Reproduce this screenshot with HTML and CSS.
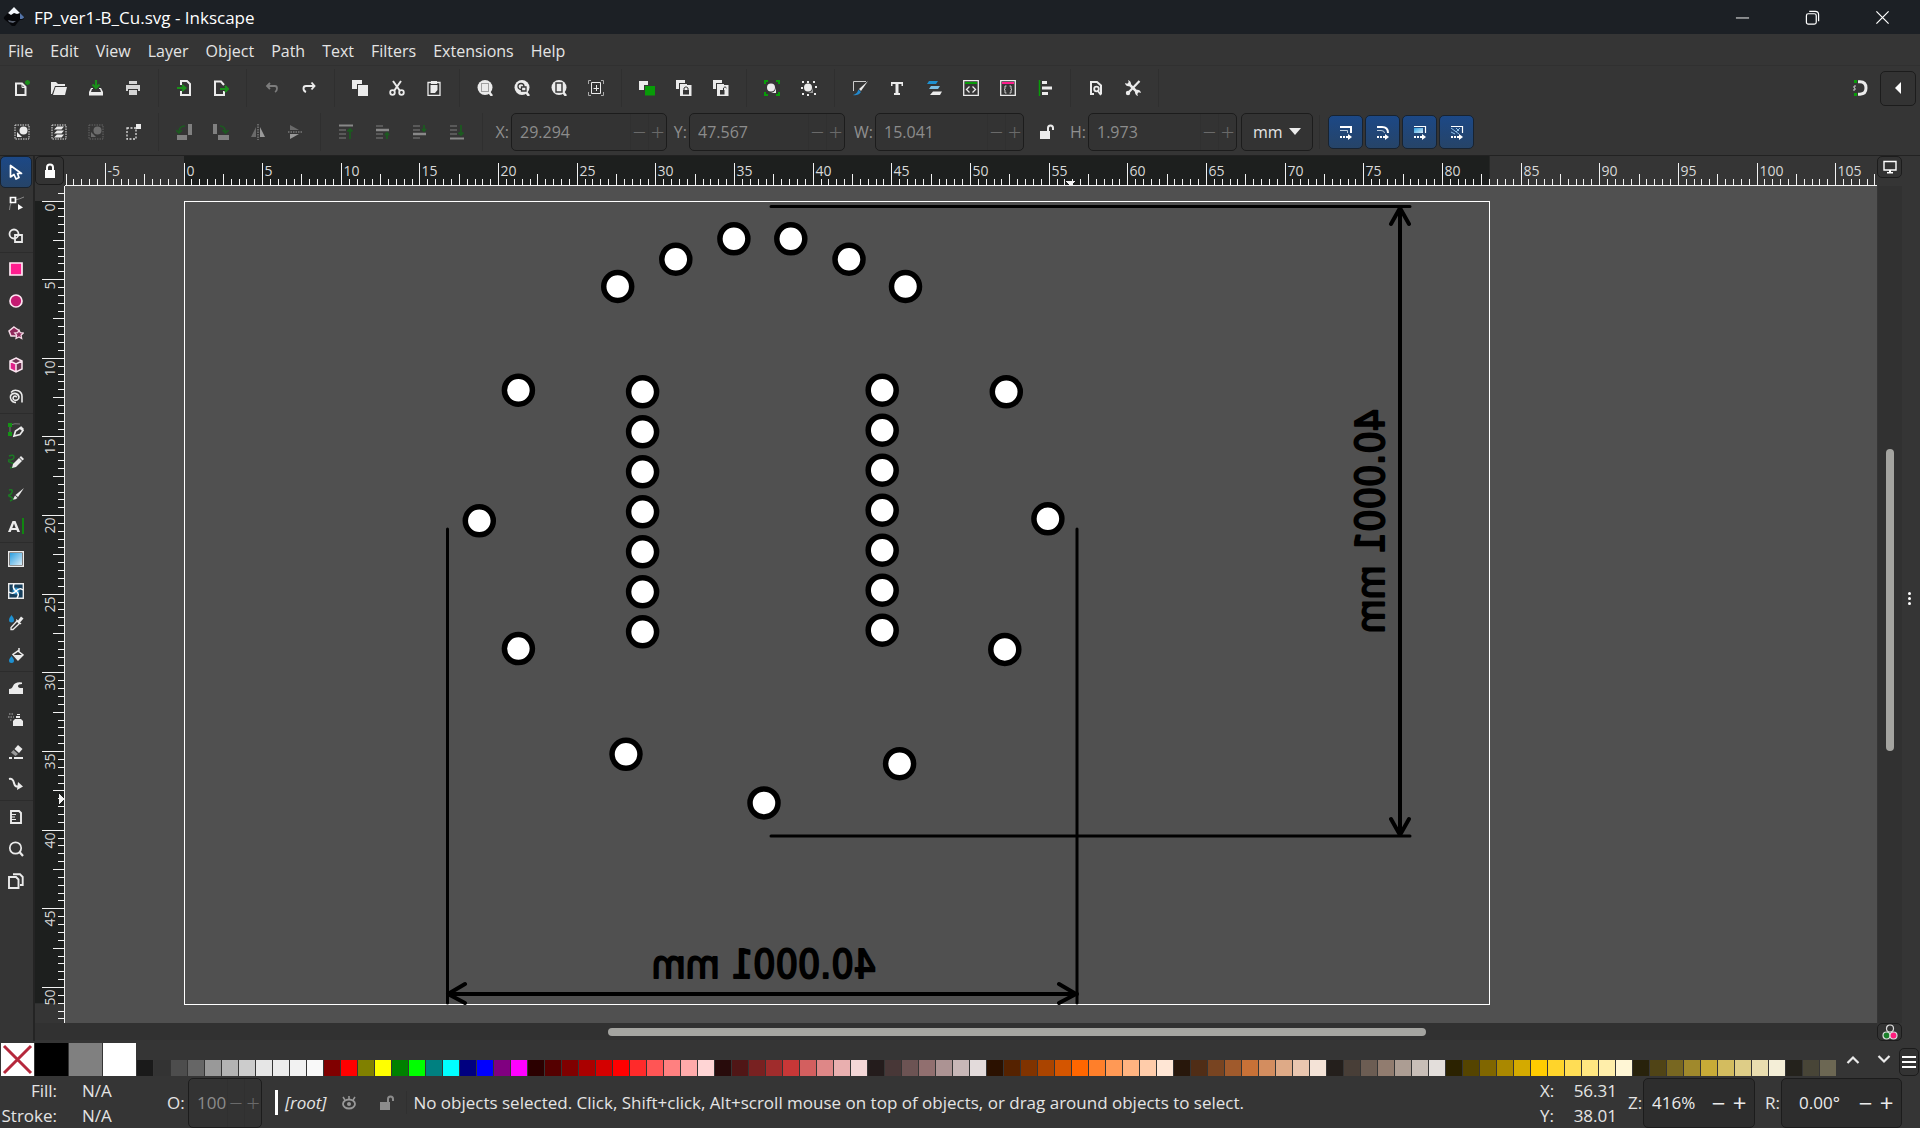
FILE: index.html
```html
<!DOCTYPE html>
<html lang="en">
<head>
    <meta charset="UTF-8">
    <meta name="viewport" content="width=device-width, initial-scale=1.0">
    <title>FP_ver1-B_Cu.svg - Inkscape</title>
    <link rel="stylesheet" href="styles.css">
</head>
<body>
    <!-- Icon symbols -->
    <svg class="sprite" aria-hidden="true">
        <defs>
            <linearGradient id="blue-fade" x1="0" y1="0" x2="1" y2="1"><stop offset="0" stop-color="#2c9fe0"/><stop offset="1" stop-color="#d8ecf8"/></linearGradient>
        </defs>
        <symbol id="i-logo" viewBox="0 0 22 22"><path d="M11 1 21 11Q22 14 17 14L15 16 12 20H9L6 17 2 14Q0 12 1 11Z" fill="#06070a"/><path d="M11 1 17 7 14 8 11 7 8 9 5 7Z" fill="#f2f6fb"/><path d="M17 7 21 11Q21 13 17 13Z" fill="#5474a8"/><path d="M5 14 9 15 13 15 10 17 6 16Z" fill="#5a6270"/></symbol>
        <symbol id="i-new" viewBox="0 0 16 16"><path d="M2 3.500H8L11.500 7V15H2Z" fill="none" stroke="#ebebeb" stroke-width="2"/><path d="M8 3V7.500H12" fill="none" stroke="#ebebeb"/><path d="M13.500 0V5M11 2.500H16M11.700 .7 15.300 4.300M15.300 .7 11.700 4.300" stroke="#1a8f1a" stroke-width="1.300"/></symbol>
        <symbol id="i-open" viewBox="0 0 16 16"><path d="M0 2H5L7 4H14V6H4L1 14H0Z" fill="#ebebeb"/><path d="M4.500 7H16L14 15H2Z" fill="#ebebeb"/></symbol>
        <symbol id="i-save" viewBox="0 0 16 16"><path d="M8 0V7M4.500 4.500 8 8 11.500 4.500" fill="none" stroke="#1a8f1a" stroke-width="2.200"/><path d="M3 8 1 12V15.500H15V12L13 8H11V9H12L13 12H3L4 9H5V8Z" fill="#ebebeb"/></symbol>
        <symbol id="i-print" viewBox="0 0 16 16"><path d="M4 1H12V4H4ZM1 5H15V11H13V9H3V11H1ZM4 10H12V15H4Z" fill="#d4d4d4"/></symbol>
        <symbol id="i-import" viewBox="0 0 16 16"><path d="M5 5V1H11L14 4V15H5V11" fill="none" stroke="#ebebeb" stroke-width="2"/><path d="M1 8H9M6 5 9.500 8 6 11" fill="none" stroke="#1a8f1a" stroke-width="2"/></symbol>
        <symbol id="i-export" viewBox="0 0 16 16"><path d="M11 5 8 1.500H2V15H11V11" fill="none" stroke="#ebebeb" stroke-width="2"/><path d="M7 9H15M12 6 15 9 12 12" fill="none" stroke="#1a8f1a" stroke-width="2"/></symbol>
        <symbol id="i-undo" viewBox="0 0 16 16"><path d="M6 3 3 6 6 9M3 6H11Q13 6 13 8.500T11 12" fill="none" stroke="#7c7c7c" stroke-width="1.800"/></symbol>
        <symbol id="i-redo" viewBox="0 0 16 16"><path d="M10.500 2.500 13.500 6 10.500 9.500M13.500 6H5Q2.500 6 2.500 8.500T5 12" fill="none" stroke="#ebebeb" stroke-width="1.900"/></symbol>
        <symbol id="i-copy" viewBox="0 0 16 16"><path d="M0 0H10V4H5V9H0ZM6 5H16V16H6Z" fill="#ebebeb"/></symbol>
        <symbol id="i-cut" viewBox="0 0 16 16"><path d="M4 1 11 11M12 1 5 11" stroke="#ebebeb" stroke-width="2"/><circle cx="3.500" cy="12.500" r="2.300" fill="none" stroke="#ebebeb" stroke-width="1.800"/><circle cx="12.500" cy="12.500" r="2.300" fill="none" stroke="#ebebeb" stroke-width="1.800"/></symbol>
        <symbol id="i-paste" viewBox="0 0 16 16"><path d="M2 2.500H14V15.500H2Z" fill="none" stroke="#ebebeb" stroke-width="1.300"/><path d="M5 1H11V4H5ZM4.500 5H11.500V10L9 13H4.500Z" fill="#ebebeb"/></symbol>
        <symbol id="i-zoomsel" viewBox="0 0 16 16"><circle cx="8" cy="7.500" r="7.500" fill="#ebebeb"/><path d="M12 12 15 16" stroke="#ebebeb" stroke-width="2.500"/><path d="M4.500 3.500H11.500V11.500H4.500Z" fill="none" stroke="#555" stroke-dasharray="1 1"/></symbol>
        <symbol id="i-zoomdraw" viewBox="0 0 16 16"><circle cx="8" cy="7.500" r="7.500" fill="#ebebeb"/><path d="M12 12 15 16" stroke="#ebebeb" stroke-width="2.500"/><path d="M7 9.500A3 3 0 1 1 10 6.500M7.500 7H12V11H7.500Z" fill="none" stroke="#353535" stroke-width="1.300"/></symbol>
        <symbol id="i-zoompage" viewBox="0 0 16 16"><circle cx="8" cy="7.500" r="7.500" fill="#ebebeb"/><path d="M12 12 15 16" stroke="#ebebeb" stroke-width="2.500"/><path d="M5 3H11V12H5Z" fill="none" stroke="#353535" stroke-width="1.400"/></symbol>
        <symbol id="i-zoomcenter" viewBox="0 0 16 16"><path d="M3.500 2.500H12.500V13.500H3.500ZM8.500 5V11M5.500 8.500H11" fill="none" stroke="#ebebeb"/><path d="M.5 4V.5H3M13 .5H15.500V4M15.500 12V15.500H13M3 15.500H.5V12" fill="none" stroke="#aaa"/></symbol>
        <symbol id="i-dup" viewBox="0 0 16 16"><path d="M0 1H9V5H5V10H0Z" fill="#ebebeb"/><path d="M6 6H16V15.500H6Z" fill="#089c08"/></symbol>
        <symbol id="i-clone" viewBox="0 0 16 16"><path d="M0 0H9V3H3V9H0ZM4 4H11V5H15.500V16H4Z" fill="#ebebeb"/><path d="M7 10H13V14.500H7Z" fill="#353535"/><path d="M8 10V8Q10 5.500 12 8V10" fill="none" stroke="#353535"/></symbol>
        <symbol id="i-unclone" viewBox="0 0 16 16"><path d="M0 0H9V3H3V9H0ZM4 4H11V5H15.500V16H4Z" fill="#ebebeb"/><path d="M7 10H11.500V14.500H7Z" fill="#353535"/><path d="M10.500 10V8Q12 5.500 13.500 8" fill="none" stroke="#353535"/></symbol>
        <symbol id="i-group" viewBox="0 0 16 16"><circle cx="7" cy="7.500" r="4" fill="#ebebeb"/><path d="M12 7V13H7Q12 12 12 7Z" fill="#ebebeb"/><path d="M0 0H4V2H2V4H0ZM16 0V4H14V2H12V0ZM0 16V12H2V14H4V16ZM16 16H12V14H14V12H16Z" fill="#089c08"/></symbol>
        <symbol id="i-ungroup" viewBox="0 0 16 16"><circle cx="7" cy="7.500" r="4" fill="#ebebeb"/><path d="M12 7V13H7Q12 12 12 7Z" fill="#999"/><path d="M1 1H3V3H1ZM6 1H8V3H6ZM12 1H14V3H12ZM1 13H3V15H1ZM6 14H8V16H6ZM13 13H15V15H13ZM0 7H2V9H0ZM14 6H16V8H14Z" fill="#ebebeb"/></symbol>
        <symbol id="i-fill" viewBox="0 0 16 16"><path d="M14 1.500H1.500V11" fill="none" stroke="#ccc"/><path d="M16 1 9 11 7 9Z" fill="#ebebeb"/><path d="M6.500 9.500 9 12Q6 16 1 15 5 14 6.500 9.500Z" fill="#2288cc"/></symbol>
        <symbol id="i-text" viewBox="0 0 16 16"><path d="M2 2H14V6H12.500V4H9.500V13H11V15H5V13H6.500V4H3.500V6H2Z" fill="#ebebeb"/></symbol>
        <symbol id="i-layers" viewBox="0 0 16 16"><path d="M3 1H12L10 4H1Z" fill="#1e90d0"/><path d="M5 6H14L12 9H3Z" fill="#7cc0e6"/><path d="M7 11.500H16L14 15H4Z" fill="#ebebeb"/></symbol>
        <symbol id="i-xml" viewBox="0 0 16 16"><path d="M.7 .7H15.300V15.300H.7Z" fill="none" stroke="#ebebeb" stroke-width="1.300"/><path d="M2 2H14V4H2Z" fill="#089c08"/><path d="M6.500 6.500 3.500 9.500 6.500 12.500M9.500 6.500 12.500 9.500 9.500 12.500" fill="none" stroke="#ebebeb" stroke-width="1.300"/></symbol>
        <symbol id="i-css" viewBox="0 0 16 16"><path d="M.7 .7H15.300V15.300H.7Z" fill="none" stroke="#ebebeb" stroke-width="1.300"/><path d="M2 2H14V4H2Z" fill="#ff1d8e"/><path d="M6.500 6H5V9L4 9.500 5 10V13H6.500M9.500 6H11V9L12 9.500 11 10V13H9.500" fill="none" stroke="#ccc"/></symbol>
        <symbol id="i-align" viewBox="0 0 16 16"><path d="M2.500 0V16" stroke="#089c08" stroke-width="1.500"/><path d="M5 1H10V4H5ZM5 6.500H15V9.500H5ZM5 12H11V15H5Z" fill="#ebebeb"/></symbol>
        <symbol id="i-docprefs" viewBox="0 0 16 16"><path d="M6 14H3V2H9L13 5.500V14" fill="none" stroke="#ebebeb" stroke-width="2"/><circle cx="8.500" cy="9" r="2.300" fill="none" stroke="#ebebeb" stroke-width="1.800"/><path d="M9.500 10.500 13 15" stroke="#ebebeb" stroke-width="2"/></symbol>
        <symbol id="i-prefs" viewBox="0 0 16 16"><path d="M3 3 13 13" stroke="#ebebeb" stroke-width="2.500"/><path d="M14.500 1 3 13" stroke="#ebebeb" stroke-width="2.200"/><path d="M0 3Q1 7 5 6L6 4Q6 1 3 0L4 3 3 4ZM16 13Q15 9 11 10L10 12Q10 15 13 16L12 13 13 12Z" fill="#ebebeb"/><circle cx="3" cy="13" r="2.200" fill="#ebebeb"/></symbol>
        <symbol id="i-snap" viewBox="0 0 16 16"><path d="M6 1.800H8Q14 2 14 8T8 14.200H6" fill="none" stroke="#ebebeb" stroke-width="3"/><path d="M2 0H5V3H2ZM2 13H5V16H2Z" fill="#089c08"/><path d="M4 6H2V8H3V10H1" fill="none" stroke="#ccc"/></symbol>
        <symbol id="i-left" viewBox="0 0 16 16"><path d="M11 2V14L5 8Z" fill="#fff"/></symbol>

        <symbol id="i-selall" viewBox="0 0 16 16"><path d="M1 1H15V15H1Z" fill="none" stroke="#ddd" stroke-dasharray="1.500 1"/><circle cx="9.500" cy="6.500" r="4" fill="#ebebeb"/><path d="M3 8 8 13H3Z" fill="#ebebeb"/></symbol>
        <symbol id="i-sellayers" viewBox="0 0 16 16"><path d="M1 1H15V15H1Z" fill="none" stroke="#ddd" stroke-dasharray="1.500 1"/><path d="M6 2.500H13L10.500 5.500H3ZM6 6.500H13L10.500 9.500H3ZM6 10.500H13L10.500 13.500H3Z" fill="#ebebeb"/></symbol>
        <symbol id="i-desel" viewBox="0 0 16 16"><path d="M1 1H15V15H1Z" fill="none" stroke="#666" stroke-dasharray="1.500 1"/><circle cx="9.500" cy="6.500" r="4" fill="#6c6c6c"/><path d="M3 8 8 13H3Z" fill="#6c6c6c"/></symbol>
        <symbol id="i-touch" viewBox="0 0 16 16"><path d="M2 4H11V15H2Z" fill="none" stroke="#ddd" stroke-width="1.300" stroke-dasharray="2 1.500"/><path d="M11 0H16V5H11Z" fill="#ebebeb"/></symbol>
        <symbol id="i-rotl" viewBox="0 0 16 16"><path d="M12 0H16V11H12ZM1 11H11V16H1Z" fill="#808080"/><path d="M3 8Q3 2 9 2M0 6 3 9 6 6" fill="none" stroke="#1c5a20" stroke-width="1.600"/></symbol>
        <symbol id="i-rotr" viewBox="0 0 16 16"><path d="M0 0H4V10H0ZM5 11H16V16H5Z" fill="#808080"/><path d="M7 2Q12 2 12.500 8M9.500 6 12.500 9 15.500 6" fill="none" stroke="#1c5a20" stroke-width="1.600"/></symbol>
        <symbol id="i-fliph" viewBox="0 0 16 16"><path d="M6 3V13H1Z" fill="#6a6a6a"/><path d="M10 3V13H15Z" fill="#999"/><path d="M8 0V16" stroke="#999" stroke-dasharray="1.500 1"/></symbol>
        <symbol id="i-flipv" viewBox="0 0 16 16"><path d="M3 6V1L12 6Z" fill="#6a6a6a"/><path d="M3 10V15L12 10Z" fill="#999"/><path d="M1 8H16" stroke="#999" stroke-dasharray="1.500 1"/></symbol>
        <symbol id="i-top" viewBox="0 0 16 16"><path d="M1 1.500H15" stroke="#888" stroke-width="2"/><path d="M1 6H8M1 10H8M1 14H8" stroke="#666" stroke-width="1.500"/><path d="M12 15V5M9.500 7.500 12 5 14.500 7.500" fill="none" stroke="#1c5a20" stroke-width="1.800"/></symbol>
        <symbol id="i-raise" viewBox="0 0 16 16"><path d="M1 6H14" stroke="#888" stroke-width="2.500"/><path d="M1 2H8M1 10H8M1 14H8" stroke="#666" stroke-width="1.500"/><path d="M12 15V9M10 11 12 9 14 11" fill="none" stroke="#1c5a20" stroke-width="1.800"/></symbol>
        <symbol id="i-lower" viewBox="0 0 16 16"><path d="M1 10H14" stroke="#888" stroke-width="2.500"/><path d="M1 2H8M1 6H8M1 14H8" stroke="#666" stroke-width="1.500"/><path d="M12 1V7M10 5 12 7 14 5" fill="none" stroke="#1c5a20" stroke-width="1.800"/></symbol>
        <symbol id="i-bottom" viewBox="0 0 16 16"><path d="M1 14.500H15" stroke="#888" stroke-width="2"/><path d="M1 2H8M1 6H8M1 10H8" stroke="#666" stroke-width="1.500"/><path d="M12 1V11M9.500 8.500 12 11 14.500 8.500" fill="none" stroke="#1c5a20" stroke-width="1.800"/></symbol>
        <symbol id="i-unlock" viewBox="0 0 16 16"><path d="M1 7H11V15H1Z" fill="currentColor"/><path d="M9 8V4Q9 1.500 11.500 1.500T14 4V6" fill="none" stroke="currentColor" stroke-width="2"/></symbol>
        <symbol id="i-lock" viewBox="0 0 16 16"><path d="M3 7H13V15H3Z" fill="#fff"/><path d="M5 8V4.500Q5 1.500 8 1.500T11 4.500V8" fill="none" stroke="#fff" stroke-width="2"/></symbol>
        <symbol id="i-scstroke" viewBox="0 0 16 16"><path d="M2 3H13V9" fill="none" stroke="#fff" stroke-width="2"/><path d="M2 6.500H9.500V9" fill="none" stroke="#bcd"/><path d="M2 13H10" stroke="#fff" stroke-width="2" stroke-dasharray="2 1"/><path d="M10 10 14 13 10 16Z" fill="#fff"/></symbol>
        <symbol id="i-sccorner" viewBox="0 0 16 16"><path d="M2 3H7Q13 3 13 9" fill="none" stroke="#fff" stroke-width="2"/><path d="M2 6.500H6Q9.500 6.500 9.500 9" fill="none" stroke="#bcd"/><path d="M2 13H10" stroke="#fff" stroke-width="2" stroke-dasharray="2 1"/><path d="M10 10 14 13 10 16Z" fill="#fff"/></symbol>
        <symbol id="i-scgrad" viewBox="0 0 16 16"><path d="M2 2.500H13.500V9" fill="none" stroke="#fff" stroke-width="1.200"/><path d="M2 4H11V9H2Z" fill="url(#blue-fade)"/><path d="M2 13H10" stroke="#fff" stroke-width="2" stroke-dasharray="2 1"/><path d="M10 10 14 13 10 16Z" fill="#fff"/></symbol>
        <symbol id="i-scpat" viewBox="0 0 16 16"><path d="M2 2.500H13.500V9" fill="none" stroke="#fff" stroke-width="1.200"/><path d="M2 4 10 10M7 4 10 7M2 8 6 10M7 8 11 4" stroke="#8fc0ea"/><path d="M2 13H10" stroke="#fff" stroke-width="2" stroke-dasharray="2 1"/><path d="M10 10 14 13 10 16Z" fill="#fff"/></symbol>

        <symbol id="t-select" viewBox="0 0 16 16"><path d="M2.500 1.500V13L6 10.500 8 15 11 13.500 9.500 9.500H13.500Z" fill="none" stroke="#fff" stroke-width="1.700" stroke-linejoin="round"/></symbol>
        <symbol id="t-node" viewBox="0 0 16 16"><path d="M1.500 14Q2 5 7 4T16 1" fill="none" stroke="#888"/><path d="M2.500 1.500H7.500V6.500H2.500Z" fill="#353535" stroke="#fff" stroke-width="1.700"/><path d="M10 8 15 11.500 10 14Z" fill="#fff"/></symbol>
        <symbol id="t-shape" viewBox="0 0 16 16"><circle cx="6" cy="6" r="4.500" fill="none" stroke="#ebebeb" stroke-width="1.800"/><path d="M7 7H14V14H7Z" fill="none" stroke="#ebebeb" stroke-width="1.800"/></symbol>
        <symbol id="t-rect" viewBox="0 0 16 16"><path d="M2 2H14V14H2Z" fill="#ff1d8e" stroke="#ffe9f4" stroke-width="1.700"/></symbol>
        <symbol id="t-circle" viewBox="0 0 16 16"><circle cx="8" cy="8" r="6" fill="#c51b72" stroke="#ffe3f1" stroke-width="1.700"/></symbol>
        <symbol id="t-star" viewBox="0 0 16 16"><path d="M6 2 11 5.500 9.500 11H3L1 6Z" fill="#8f2a5c" stroke="#f6dbe8" stroke-width="1.500"/><path d="M11 5 12.300 7.700 15.300 8 13 10.200 13.700 13.500 11 12 8 13.500 8.700 10.200 6.700 8 9.700 7.700Z" fill="#8f2a5c" stroke="#f6dbe8" stroke-width="1.200"/></symbol>
        <symbol id="t-box" viewBox="0 0 16 16"><path d="M8 1 14 4V12L8 15 2 12V4Z" fill="#6f3453"/><path d="M2 4 8 7V15L2 12Z" fill="#e0218a"/><path d="M8 1 14 4V12L8 15 2 12V4ZM2 4 8 7 14 4M8 7V15" fill="none" stroke="#fbe6f1" stroke-width="1.500"/></symbol>
        <symbol id="t-spiral" viewBox="0 0 16 16"><path d="M8.500 8.500A1.500 1.500 0 0 0 7 7A2.200 2.200 0 0 0 5.500 10.500A3.300 3.300 0 0 0 11 8A4.500 4.500 0 0 0 2.500 7A5.500 5.500 0 0 0 7 13.500H8" fill="none" stroke="#ebebeb" stroke-width="1.600"/><path d="M3 3.500A6.300 6.300 0 0 1 14 8V13.500" fill="none" stroke="#ebebeb" stroke-width="1.600"/></symbol>
        <symbol id="t-pen" viewBox="0 0 16 16"><path d="M2 13V3Q7 1 12 2" fill="none" stroke="#777"/><path d="M0 1H4V5H0ZM0 10H4V14H0Z" fill="#149414"/><path d="M6 14 7.500 9 12 6 15 8.500 12 12.500Z" fill="none" stroke="#ebebeb" stroke-width="1.700"/><path d="M13 4 16 7 14.500 8.500 11.500 6Z" fill="#ebebeb"/></symbol>
        <symbol id="t-pencil" viewBox="0 0 16 16"><path d="M1 2Q6 0 6 3T1 6 4 9 2 14" fill="none" stroke="#1c7a24" stroke-width="1.400"/><path d="M4 14 5 10 11 4 14 7 8 13Z" fill="#ebebeb"/><path d="M11.500 3.500 13 2 16 5 14.500 6.500Z" fill="#ebebeb"/></symbol>
        <symbol id="t-brush" viewBox="0 0 16 16"><path d="M1 4Q5 3 4 6T1 9 3 11 2 15" fill="none" stroke="#1c7a24" stroke-width="1.600"/><path d="M16 2 10 11 7.500 9Z" fill="#ebebeb"/><path d="M7 9.500 9.500 12Q7 14 5 13.500Z" fill="#ebebeb"/></symbol>
        <symbol id="t-text" viewBox="0 0 16 16"><path d="M0 14 4.500 3H7.500L12 14H9.300L8.500 12H3.500L2.700 14ZM4.300 10H7.700L6 5.500Z" fill="#ebebeb" fill-rule="evenodd"/><path d="M15 0V16" stroke="#089c08" stroke-width="1.600"/></symbol>
        <symbol id="t-grad" viewBox="0 0 16 16"><path d="M.7 .7H15.300V15.300H.7Z" fill="none" stroke="#ebebeb" stroke-width="1.400"/><path d="M2 2H14V14H2Z" fill="url(#blue-fade)"/></symbol>
        <symbol id="t-mesh" viewBox="0 0 16 16"><path d="M.7 .7H15.300V15.300H.7Z" fill="#173f5c" stroke="#ebebeb" stroke-width="1.400"/><circle cx="8" cy="8" r="3.500" fill="#2c8fc8"/><path d="M8 8Q4 5 6 1M8 8Q12 4 15 7M8 8Q12 11 9 15M8 8Q5 12 1 9" fill="none" stroke="#fff" stroke-width="1.500"/></symbol>
        <symbol id="t-dropper" viewBox="0 0 16 16"><path d="M3.500 0Q6 3 6 5A2.500 2.500 0 0 1 1 5Q1 3 3.500 0Z" fill="#1e90d0"/><path d="M9 6 11.500 8.500 5 14.500H3V12.500Z" fill="none" stroke="#ebebeb" stroke-width="1.300"/><path d="M8.500 4 10 5.500 13 1.500 15.500 3.500 12 7.500 13.500 8.500 12.500 9.500 8 5Z" fill="#ebebeb"/></symbol>
        <symbol id="t-bucket" viewBox="0 0 16 16"><path d="M3.500 9Q6 12 6 13.500A2.500 2.500 0 0 1 1 13.500Q1 12 3.500 9Z" fill="#1e90d0"/><path d="M11 1V5M10 4 15 8 10 13 5 7.500Z" fill="#353535" stroke="#ebebeb" stroke-width="1.500"/><path d="M6 8H15L10 13Z" fill="#ebebeb"/></symbol>
        <symbol id="t-tweak" viewBox="0 0 16 16"><path d="M1 14V9Q4 9 5 6 7 1.500 14 2.500V4Q10 4 10 6 10 8.500 15 8V14Z" fill="#ebebeb"/></symbol>
        <symbol id="t-spray" viewBox="0 0 16 16"><path d="M5 14V9L7 7H13L15 9V14ZM8 4H12V6H8ZM9 2H12V3H9Z" fill="#ebebeb"/><path d="M1 2H6M0 5H6M2 8H4" stroke="#888" stroke-width="1.700" stroke-dasharray="1.500 1"/></symbol>
        <symbol id="t-eraser" viewBox="0 0 16 16"><path d="M10 1 14.500 5 11 9 6.500 5Z" fill="#ebebeb"/><path d="M5.500 6 10 10 7.500 12 3 8.500Z" fill="#999"/><path d="M1 14H4M6 14H15" stroke="#ebebeb" stroke-width="1.800"/></symbol>
        <symbol id="t-connector" viewBox="0 0 16 16"><path d="M1 3Q5 2 6 7T12 10" fill="none" stroke="#ebebeb" stroke-width="2"/><path d="M10 6 15 10.500 9 14Z" fill="#ebebeb"/></symbol>
        <symbol id="t-measure" viewBox="0 0 16 16"><path d="M3 2H11L13 4V14H3Z" fill="none" stroke="#ebebeb" stroke-width="1.900"/><path d="M3 5.500H8M3 8H7M3 10.500H8" stroke="#ebebeb" stroke-width="1.200"/></symbol>
        <symbol id="t-zoom" viewBox="0 0 16 16"><circle cx="7.500" cy="7" r="5.700" fill="none" stroke="#ebebeb" stroke-width="1.700"/><path d="M11.500 11 15 15" stroke="#ebebeb" stroke-width="2.200"/></symbol>
        <symbol id="t-pages" viewBox="0 0 16 16"><path d="M1 4H8L10.500 6.500V15H1Z" fill="none" stroke="#ebebeb" stroke-width="1.900"/><path d="M5 1.300H12L14.700 4V12H12" fill="none" stroke="#ebebeb" stroke-width="1.900"/></symbol>
        <symbol id="i-monitor" viewBox="0 0 16 16"><path d="M2 2.500H14V11H2Z" fill="none" stroke="#fff" stroke-width="1.400"/><path d="M7 11H9V13H11V14.500H5V13H7Z" fill="#fff"/></symbol>
        <symbol id="i-cms" viewBox="0 0 16 16"><circle cx="8" cy="4.500" r="3.500" fill="none" stroke="#ddd" stroke-width="1.200"/><circle cx="4.500" cy="11.500" r="3.500" fill="#1a7f2a" stroke="#ddd" stroke-width="1.200"/><circle cx="11.500" cy="11.500" r="3.500" fill="#ff1d7e" stroke="#ddd" stroke-width="1.200"/></symbol>
        <symbol id="i-eye" viewBox="0 0 16 16"><ellipse cx="8" cy="9" rx="6" ry="4.500" fill="none" stroke="#999" stroke-width="1.800"/><circle cx="8" cy="9" r="2" fill="#999"/><path d="M2 2 4 5M8 1V4M14 2 12 5" stroke="#999" stroke-width="1.500"/></symbol>
        <symbol id="i-up" viewBox="0 0 16 16"><path d="M2.500 11 8 5.500 13.500 11" fill="none" stroke="#ebebeb" stroke-width="2.200"/></symbol>
        <symbol id="i-down" viewBox="0 0 16 16"><path d="M2.500 4 8 9.500 13.500 4" fill="none" stroke="#ebebeb" stroke-width="2.200"/></symbol>
        <symbol id="i-menu" viewBox="0 0 16 16"><path d="M1 3H15M1 8H15M1 13H15" stroke="#fff" stroke-width="2"/></symbol>
        <symbol id="i-min" viewBox="0 0 16 16"><path d="M1 8.500H15" stroke="#fff"/></symbol>
        <symbol id="i-restore" viewBox="0 0 16 16"><rect x="1.500" y="4" width="10.500" height="11" rx="2" fill="none" stroke="#fff" stroke-width="1.300"/><path d="M4.500 1.500H11Q14.500 1.500 14.500 5V12" fill="none" stroke="#fff" stroke-width="1.300"/></symbol>
        <symbol id="i-close" viewBox="0 0 16 16"><path d="M1.500 1.500 14.500 14.500M14.500 1.500 1.500 14.500" stroke="#fff" stroke-width="1.300"/></symbol>
    </svg>

    <div class="app">
        <!-- Title Bar -->
        <header class="titlebar">
            <svg class="logo"><use href="#i-logo"/></svg>
            <h1>FP_ver1-B_Cu.svg - Inkscape</h1>
            <div class="window-buttons">
                <button title="Minimize"><svg><use href="#i-min"/></svg></button>
                <button title="Restore"><svg><use href="#i-restore"/></svg></button>
                <button title="Close"><svg><use href="#i-close"/></svg></button>
            </div>
        </header>

        <!-- Menu -->
        <nav class="menubar">
            <a href="#">File</a>
            <a href="#">Edit</a>
            <a href="#">View</a>
            <a href="#">Layer</a>
            <a href="#">Object</a>
            <a href="#">Path</a>
            <a href="#">Text</a>
            <a href="#">Filters</a>
            <a href="#">Extensions</a>
            <a href="#">Help</a>
        </nav>

        <!-- Commands Bar -->
        <div class="toolbar">
            <div class="group">
                <button title="New"><svg><use href="#i-new"/></svg></button>
                <button title="Open"><svg><use href="#i-open"/></svg></button>
                <button title="Save"><svg><use href="#i-save"/></svg></button>
                <button title="Print"><svg><use href="#i-print"/></svg></button>
            </div>
            <div class="group">
                <button title="Import"><svg><use href="#i-import"/></svg></button>
                <button title="Export"><svg><use href="#i-export"/></svg></button>
            </div>
            <div class="group">
                <button title="Undo" disabled><svg><use href="#i-undo"/></svg></button>
                <button title="Redo"><svg><use href="#i-redo"/></svg></button>
            </div>
            <div class="group">
                <button title="Copy"><svg><use href="#i-copy"/></svg></button>
                <button title="Cut"><svg><use href="#i-cut"/></svg></button>
                <button title="Paste"><svg><use href="#i-paste"/></svg></button>
            </div>
            <div class="group">
                <button title="Zoom Selection"><svg><use href="#i-zoomsel"/></svg></button>
                <button title="Zoom Drawing"><svg><use href="#i-zoomdraw"/></svg></button>
                <button title="Zoom Page"><svg><use href="#i-zoompage"/></svg></button>
                <button title="Center Page"><svg><use href="#i-zoomcenter"/></svg></button>
            </div>
            <div class="group">
                <button title="Duplicate"><svg><use href="#i-dup"/></svg></button>
                <button title="Create Clone"><svg><use href="#i-clone"/></svg></button>
                <button title="Unlink Clone"><svg><use href="#i-unclone"/></svg></button>
            </div>
            <div class="group">
                <button title="Group"><svg><use href="#i-group"/></svg></button>
                <button title="Ungroup"><svg><use href="#i-ungroup"/></svg></button>
            </div>
            <div class="group">
                <button title="Fill and Stroke"><svg><use href="#i-fill"/></svg></button>
                <button title="Text and Font"><svg><use href="#i-text"/></svg></button>
                <button title="Layers and Objects"><svg><use href="#i-layers"/></svg></button>
                <button title="XML Editor"><svg><use href="#i-xml"/></svg></button>
                <button title="Selectors and CSS"><svg><use href="#i-css"/></svg></button>
                <button title="Align and Distribute"><svg><use href="#i-align"/></svg></button>
            </div>
            <div class="group">
                <button title="Document Properties"><svg><use href="#i-docprefs"/></svg></button>
                <button title="Preferences"><svg><use href="#i-prefs"/></svg></button>
            </div>
            <div class="snap">
                <button title="Snapping"><svg><use href="#i-snap"/></svg></button>
                <button class="framed" title="Snap Options"><svg><use href="#i-left"/></svg></button>
            </div>
        </div>

        <!-- Tool Controls -->
        <div class="toolbar controls">
            <div class="group">
                <button title="Select All"><svg><use href="#i-selall"/></svg></button>
                <button title="Select All in All Layers"><svg><use href="#i-sellayers"/></svg></button>
                <button title="Deselect" disabled><svg><use href="#i-desel"/></svg></button>
                <button title="Touch Select"><svg><use href="#i-touch"/></svg></button>
            </div>
            <div class="group">
                <button title="Rotate Left" disabled><svg><use href="#i-rotl"/></svg></button>
                <button title="Rotate Right" disabled><svg><use href="#i-rotr"/></svg></button>
                <button title="Flip Horizontal" disabled><svg><use href="#i-fliph"/></svg></button>
                <button title="Flip Vertical" disabled><svg><use href="#i-flipv"/></svg></button>
            </div>
            <div class="group">
                <button title="Raise to Top" disabled><svg><use href="#i-top"/></svg></button>
                <button title="Raise" disabled><svg><use href="#i-raise"/></svg></button>
                <button title="Lower" disabled><svg><use href="#i-lower"/></svg></button>
                <button title="Lower to Bottom" disabled><svg><use href="#i-bottom"/></svg></button>
            </div>
            <label for="pos-x">X:</label>
            <div class="spin"><input id="pos-x" type="text" value="29.294" disabled><button disabled>−</button><button disabled>+</button></div>
            <label for="pos-y">Y:</label>
            <div class="spin"><input id="pos-y" type="text" value="47.567" disabled><button disabled>−</button><button disabled>+</button></div>
            <label for="size-w" class="wide">W:</label>
            <div class="spin short"><input id="size-w" type="text" value="15.041" disabled><button disabled>−</button><button disabled>+</button></div>
            <button class="ratio" title="Lock Ratio"><svg><use href="#i-unlock"/></svg></button>
            <label for="size-h" class="tight">H:</label>
            <div class="spin short"><input id="size-h" type="text" value="1.973" disabled><button disabled>−</button><button disabled>+</button></div>
            <div class="unit">
                <select aria-label="Unit">
                    <option>mm</option>
                    <option>px</option>
                    <option>in</option>
                </select>
            </div>
            <div class="scale-options">
                <button title="Scale Stroke Width"><svg><use href="#i-scstroke"/></svg></button>
                <button title="Scale Corners"><svg><use href="#i-sccorner"/></svg></button>
                <button title="Move Gradients"><svg><use href="#i-scgrad"/></svg></button>
                <button title="Move Patterns"><svg><use href="#i-scpat"/></svg></button>
            </div>
        </div>

        <main class="workspace">
            <!-- Toolbox -->
            <aside class="toolbox">
                <div class="tools">
                    <button class="active" title="Selector"><svg><use href="#t-select"/></svg></button>
                    <button title="Node"><svg><use href="#t-node"/></svg></button>
                    <button title="Shape Builder"><svg><use href="#t-shape"/></svg></button>
                </div>
                <div class="tools">
                    <button title="Rectangle"><svg><use href="#t-rect"/></svg></button>
                    <button title="Ellipse"><svg><use href="#t-circle"/></svg></button>
                    <button title="Star"><svg><use href="#t-star"/></svg></button>
                    <button title="3D Box"><svg><use href="#t-box"/></svg></button>
                    <button title="Spiral"><svg><use href="#t-spiral"/></svg></button>
                </div>
                <div class="tools">
                    <button title="Pen"><svg><use href="#t-pen"/></svg></button>
                    <button title="Pencil"><svg><use href="#t-pencil"/></svg></button>
                    <button title="Calligraphy"><svg><use href="#t-brush"/></svg></button>
                    <button title="Text"><svg><use href="#t-text"/></svg></button>
                </div>
                <div class="tools">
                    <button title="Gradient"><svg><use href="#t-grad"/></svg></button>
                    <button title="Mesh"><svg><use href="#t-mesh"/></svg></button>
                    <button title="Dropper"><svg><use href="#t-dropper"/></svg></button>
                    <button title="Paint Bucket"><svg><use href="#t-bucket"/></svg></button>
                </div>
                <div class="tools">
                    <button title="Tweak"><svg><use href="#t-tweak"/></svg></button>
                    <button title="Spray"><svg><use href="#t-spray"/></svg></button>
                    <button title="Eraser"><svg><use href="#t-eraser"/></svg></button>
                    <button title="Connector"><svg><use href="#t-connector"/></svg></button>
                </div>
                <div class="tools">
                    <button title="Measure"><svg><use href="#t-measure"/></svg></button>
                    <button title="Zoom"><svg><use href="#t-zoom"/></svg></button>
                    <button title="Pages"><svg><use href="#t-pages"/></svg></button>
                </div>
            </aside>

            <div class="desk">
                <button class="framed guide-lock" title="Lock Guides"><svg><use href="#i-lock"/></svg></button>
                <svg class="ruler" id="ruler-top"></svg>
                <button class="framed display-mode" title="Display Mode"><svg><use href="#i-monitor"/></svg></button>
                <svg class="ruler" id="ruler-left"></svg>

                <!-- Drawing, origin at the page corner -->
                <svg class="canvas">
                    <g transform="translate(119 15)">
                        <rect class="page" x="0.500" y="0.500" width="1305" height="803"/>
                        <g class="dimension">
                            <path class="extension" d="M587 5.500H1226M587 635H1226M263.500 328V802M893 328V802"/>
                            <path d="M1216 7V634M264 793H893"/>
                            <path d="M1207 23 1216 7 1225 23M1207 618 1216 634 1225 618"/>
                            <path d="M281 783 264 793 281 802M875 783 892 793 875 802"/>
                            <text transform="matrix(-1 0 0 1 692 777)">40.0001 mm</text>
                            <text transform="matrix(0 1 1 0 1200 208)">40.0001 mm</text>
                        </g>
                        <g class="pads">
                            <circle cx="433.700" cy="85.500" r="14"/>
                            <circle cx="491.800" cy="58.200" r="14"/>
                            <circle cx="549.900" cy="37.800" r="14"/>
                            <circle cx="606.800" cy="37.800" r="14"/>
                            <circle cx="665" cy="58.200" r="14"/>
                            <circle cx="721.500" cy="85.500" r="14"/>
                            <circle cx="334.400" cy="189.200" r="14"/>
                            <circle cx="822.300" cy="190.800" r="14"/>
                            <circle cx="295.300" cy="319.800" r="14"/>
                            <circle cx="863.900" cy="317.800" r="14"/>
                            <circle cx="334.400" cy="447.600" r="14"/>
                            <circle cx="820.800" cy="448.400" r="14"/>
                            <circle cx="442" cy="553.300" r="14"/>
                            <circle cx="715.600" cy="562.700" r="14"/>
                            <circle cx="580" cy="601.900" r="14"/>
                            <!-- left header -->
                            <circle cx="458.600" cy="190.800" r="14"/>
                            <circle cx="458.600" cy="230.800" r="14"/>
                            <circle cx="458.600" cy="270.800" r="14"/>
                            <circle cx="458.600" cy="310.800" r="14"/>
                            <circle cx="458.600" cy="350.800" r="14"/>
                            <circle cx="458.600" cy="390.800" r="14"/>
                            <circle cx="458.600" cy="430.800" r="14"/>
                            <!-- right header -->
                            <circle cx="698.200" cy="189.200" r="14"/>
                            <circle cx="698.200" cy="229.200" r="14"/>
                            <circle cx="698.200" cy="269.200" r="14"/>
                            <circle cx="698.200" cy="309.200" r="14"/>
                            <circle cx="698.200" cy="349.200" r="14"/>
                            <circle cx="698.200" cy="389.200" r="14"/>
                            <circle cx="698.200" cy="429.200" r="14"/>
                        </g>
                    </g>
                </svg>

                <div class="scroll-v"><span></span></div>
                <div class="scroll-h"><span></span></div>
                <button class="framed cms" title="Color Management"><svg><use href="#i-cms"/></svg></button>
            </div>
            <div class="dock-handle"><i></i><i></i><i></i></div>
        </main>

        <!-- Palette -->
        <div class="palette">
            <button class="big none" title="None"><svg viewBox="0 0 33 33"><path d="M3 3 30 30M30 3 3 30"/></svg></button>
            <button class="big black" title="Black"></button>
            <button class="big gray" title="Gray"></button>
            <button class="big white" title="White"></button>
            <div class="swatches" id="swatches"></div>
            <div class="palette-nav">
                <button title="Previous"><svg><use href="#i-up"/></svg></button>
                <button title="Next"><svg><use href="#i-down"/></svg></button>
                <button class="framed" title="Palette Menu"><svg><use href="#i-menu"/></svg></button>
            </div>
        </div>

        <!-- Status Bar -->
        <footer class="statusbar">
            <dl class="style-info">
                <dt>Fill:</dt><dd>N/A</dd>
                <dt>Stroke:</dt><dd>N/A</dd>
            </dl>
            <label for="opacity">O:</label>
            <div class="spin opacity"><input id="opacity" type="text" value="100" disabled><button disabled>−</button><button disabled>+</button></div>
            <span class="layer-color"></span>
            <button class="layer-name">[root]</button>
            <button class="layer-icon" title="Toggle Visibility"><svg><use href="#i-eye"/></svg></button>
            <button class="layer-icon" title="Toggle Lock"><svg><use href="#i-unlock"/></svg></button>
            <p class="message">No objects selected. Click, Shift+click, Alt+scroll mouse on top of objects, or drag around objects to select.</p>
            <dl class="coords">
                <dt>X:</dt><dd>56.31</dd>
                <dt>Y:</dt><dd>38.01</dd>
            </dl>
            <label for="zoom" class="zoom-label">Z:</label>
            <div class="spin zoom"><input id="zoom" type="text" value="416%"><button>−</button><button>+</button></div>
            <label for="rotation" class="rotation-label">R:</label>
            <div class="spin rotation"><input id="rotation" type="text" value="0.00°"><button>−</button><button>+</button></div>
        </footer>
    </div>

    <script src="script.js"></script>
</body>
</html>
```
FILE: styles.css
```css
/* General Reset */
* {
    margin: 0;
    padding: 0;
    box-sizing: border-box;
}

body {
    background-color: #353535;
    color: #e4e4e4;
    font-family: 'Open Sans', 'Noto Sans', sans-serif;
    font-size: 16px;
    overflow: hidden;
}

button,
input,
select {
    font: inherit;
    color: inherit;
    background: none;
    border: none;
    outline: none;
}

button {
    display: flex;
    align-items: center;
    justify-content: center;
}

svg {
    width: 16px;
    height: 16px;
    flex: none;
}

.sprite {
    position: absolute;
    width: 0;
    height: 0;
}

.app {
    display: flex;
    flex-direction: column;
    height: 100vh;
}

.framed {
    border: 1px solid #1c1c1c;
    border-radius: 5px;
    background-color: #333;
}

/* Title Bar */
.titlebar {
    display: flex;
    align-items: center;
    height: 34px;
    padding: 0 3px;
    background-color: #1c2025;
    color: #fff;
}

.titlebar .logo {
    width: 22px;
    height: 22px;
}

.titlebar h1 {
    margin-left: 9px;
    font-size: 17px;
    font-weight: normal;
}

.window-buttons {
    display: flex;
    margin-left: auto;
}

.window-buttons button {
    width: 70px;
    height: 34px;
}

.window-buttons svg {
    width: 15px;
    height: 15px;
}

/* Menu */
.menubar {
    display: flex;
    align-items: center;
    height: 32px;
    border-bottom: 1px solid #303030;
}

.menubar a {
    padding: 3px 9px 0 8px;
    color: #e4e4e4;
    text-decoration: none;
}

/* Toolbars */
.toolbar {
    display: flex;
    align-items: center;
    height: 44px;
    padding-left: 3px;
}

.group {
    display: flex;
    margin-right: 6px;
    padding-right: 7px;
    border-right: 1px solid #2f2f2f;
}

.group button {
    width: 37px;
    height: 38px;
}

.snap {
    display: flex;
    gap: 2px;
    margin-left: auto;
    padding-right: 4px;
}

.snap button {
    width: 36px;
    height: 35px;
}

.controls {
    height: 46px;
    padding-bottom: 2px;
    border-bottom: 1px solid #222;
}

.controls label {
    width: 22px;
    padding-right: 2px;
    text-align: right;
    color: #909090;
}

.controls .wide {
    width: 30px;
}

.controls .tight {
    width: 20px;
}

.group,
.controls label,
.spin {
    flex: none;
}

.ratio {
    width: 44px;
    height: 38px;
    padding-left: 2px;
    color: #ebebeb;
}

/* Spin Boxes */
.spin {
    display: flex;
    width: 156px;
    height: 38px;
    border: 1px solid #1c1c1c;
    border-radius: 5px;
    background-color: #333;
    color: #8c8c8c;
}

.spin.short {
    width: 149px;
}

.spin input {
    flex: 1;
    min-width: 0;
    padding-left: 8px;
}

.spin button {
    width: 18px;
    font-size: 24px;
    font-weight: 300;
    color: #6a6a6a;
    border-left: 1px solid #303030;
}

.unit {
    position: relative;
    margin-left: 4px;
}

.unit select {
    width: 72px;
    height: 38px;
    padding-left: 11px;
    appearance: none;
    border: 1px solid #1c1c1c;
    border-radius: 5px;
    background-color: #333;
}

.unit::after {
    content: "";
    position: absolute;
    top: 15px;
    right: 12px;
    border: 6px solid transparent;
    border-top: 7px solid #ebebeb;
    border-bottom: 0;
    pointer-events: none;
}

.scale-options {
    display: flex;
    gap: 2px;
    margin-left: 6px;
    padding-left: 8px;
    border-left: 1px solid #2f2f2f;
}

.scale-options button,
.tools .active {
    border: 1px solid #182330;
    border-radius: 5px;
    background: linear-gradient(#1c4886, #264468);
}

.scale-options button {
    width: 35px;
    height: 34px;
}

/* Workspace */
.workspace {
    display: flex;
    flex: 1;
    min-height: 0;
}

.toolbox {
    width: 35px;
    border-right: 2px solid #242424;
}

.tools {
    border-bottom: 1px solid #2c2c2c;
}

.tools:last-child {
    border-bottom: none;
}

.tools button {
    width: 32px;
    height: 32px;
}

.desk {
    flex: 1;
    display: grid;
    grid-template-columns: 30px 1fr 25px;
    grid-template-rows: 30px minmax(0, 1fr) 18px;
    min-width: 0;
}

.guide-lock {
    margin: 0 1px 1px 0;
}

.ruler {
    width: 100%;
    height: 100%;
    background-color: #353535;
}

.ruler .shade {
    fill: #1d1f1e;
}

.ruler path {
    stroke: #f2f2f2;
    shape-rendering: crispEdges;
}

.ruler .marker {
    fill: #f2f2f2;
    stroke: none;
}

.ruler text {
    font-size: 14px;
    fill: #d8d8d8;
}

.display-mode {
    height: 22px;
}

/* Drawing */
.canvas {
    width: 100%;
    height: 100%;
    background-color: #505050;
}

.page {
    fill: none;
    stroke: #fff;
}

.dimension path {
    fill: none;
    stroke: #000;
    stroke-width: 4;
    stroke-linecap: round;
    stroke-linejoin: round;
}

.dimension .extension {
    stroke-width: 3;
}

.dimension text {
    font-family: 'DejaVu Sans Condensed', 'DejaVu Sans', sans-serif;
    font-size: 39px;
    stroke: #000;
    stroke-width: 2;
    stroke-linejoin: round;
}

.pads circle {
    fill: #fff;
    stroke: #000;
    stroke-width: 5.5;
}

/* Scrollbars */
.scroll-v,
.scroll-h {
    display: grid;
    background-color: #313131;
}

.scroll-v {
    grid-template-rows: 263fr 302fr 272fr;
    justify-content: center;
    margin-left: 1px;
}

.scroll-h {
    grid-column: 1 / 3;
    grid-template-columns: 573fr 818fr 451fr;
    align-items: center;
    margin-bottom: 1px;
}

.scroll-v span {
    grid-row: 2;
    width: 8px;
    border-radius: 4px;
    background-color: #a4a4a0;
}

.scroll-h span {
    grid-column: 2;
    height: 8px;
    border-radius: 4px;
    background-color: #a4a4a0;
}

.dock-handle {
    display: flex;
    flex-direction: column;
    align-items: center;
    justify-content: center;
    gap: 2px;
    width: 18px;
    padding-right: 4px;
}

.dock-handle i {
    width: 3px;
    height: 3px;
    border-radius: 50%;
    background-color: #fff;
}

/* Palette */
.palette {
    display: flex;
    gap: 1px;
    height: 36px;
    padding: 2px 1px 1px;
}

.big {
    width: 33px;
    height: 33px;
    flex: none;
}

.big svg {
    width: 33px;
    height: 33px;
    fill: none;
    stroke: #b5283c;
    stroke-width: 3;
}

.none,
.white {
    background-color: #fff;
}

.black {
    background-color: #000;
}

.gray {
    background-color: #808080;
}

.swatches {
    display: flex;
    gap: 1px;
    align-items: flex-end;
    min-width: 0;
    overflow: hidden;
}

.swatches button {
    width: 16px;
    height: 16px;
    flex: none;
}

.palette-nav {
    display: flex;
    align-items: center;
    margin-left: auto;
}

.palette-nav button {
    width: 31px;
    height: 28px;
}

.palette-nav .framed {
    width: 20px;
    align-self: flex-end;
}

/* Status Bar */
.statusbar {
    display: flex;
    align-items: center;
    height: 51px;
    padding-right: 18px;
    font-size: 17px;
}

.statusbar dl {
    display: grid;
    flex: none;
    padding-top: 1px;
    line-height: 25px;
}

.style-info {
    grid-template-columns: 57px 1fr;
    column-gap: 25px;
    width: 167px;
}

.style-info dt {
    text-align: right;
}

.statusbar .spin {
    height: 50px;
}

.statusbar .opacity {
    width: 74px;
}

.opacity button {
    width: 17px;
}

.statusbar label {
    flex: none;
    width: 21px;
}

.layer-color {
    width: 3px;
    height: 25px;
    margin: 0 7px 0 13px;
    background-color: #fff;
}

.layer-name {
    margin-right: 4px;
    font-style: italic;
}

.layer-icon {
    width: 38px;
    height: 38px;
    color: #8c8c8c;
}

.message {
    flex: 1;
    padding-left: 6px;
    white-space: nowrap;
    border-left: 1px solid #303030;
}

.coords {
    grid-template-columns: 1fr auto;
    width: 77px;
    margin-right: 11px;
}

.coords dd {
    text-align: right;
}

.statusbar .zoom,
.statusbar .rotation {
    padding-right: 4px;
    color: #ebebeb;
    background-color: #2d2d2d;
}

.statusbar .zoom {
    width: 112px;
}

.statusbar .rotation {
    width: 121px;
}

.zoom button,
.rotation button {
    width: 21px;
    font-weight: normal;
    color: #ebebeb;
    border-left: none;
}

.rotation input {
    padding-left: 17px;
}

.statusbar .zoom-label {
    width: 15px;
}

.statusbar .rotation-label {
    width: 26px;
    padding-left: 10px;
}
```
FILE: script.js
```js
const SVG_NS = 'http://www.w3.org/2000/svg';
const SCALE = 15.73; // pixels per mm at 416%
const ORIGIN_X = 119;
const ORIGIN_Y = 15;
const RULER = 30;

function add(parent, name, attrs, text) {
    const el = document.createElementNS(SVG_NS, name);
    for (const key in attrs) {
        el.setAttribute(key, attrs[key]);
    }
    if (text !== undefined) {
        el.textContent = text;
    }
    parent.appendChild(el);
}

function tickStart(step) {
    if (step % 10 === 0) return 7;
    if (step % 5 === 0) return 18;
    return 23;
}

function drawTopRuler() {
    const ruler = document.getElementById('ruler-top');
    const width = ruler.clientWidth;
    ruler.replaceChildren();
    add(ruler, 'rect', { class: 'shade', x: ORIGIN_X, y: 0, width: 83 * SCALE, height: RULER });

    let d = `M0 ${RULER - 0.5}H${width}`;
    for (let i = -15; ORIGIN_X + i * SCALE / 2 < width; i++) {
        const x = Math.floor(ORIGIN_X + i * SCALE / 2) + 0.5;
        d += `M${x} ${tickStart(i)}V${RULER}`;
        if (i % 10 === 0) {
            add(ruler, 'text', { x: x + 2, y: 20 }, i / 2);
        }
    }
    add(ruler, 'path', { d: d });
    add(ruler, 'path', { class: 'marker', d: 'M1000 25H1010L1005 30Z' });
}

function drawLeftRuler() {
    const ruler = document.getElementById('ruler-left');
    const height = ruler.clientHeight;
    ruler.replaceChildren();
    add(ruler, 'rect', { class: 'shade', x: 0, y: ORIGIN_Y, width: RULER, height: 51 * SCALE });

    let d = `M${RULER - 0.5} 0V${height}`;
    for (let i = -1; ORIGIN_Y + i * SCALE / 2 < height; i++) {
        const y = Math.floor(ORIGIN_Y + i * SCALE / 2) + 0.5;
        d += `M${tickStart(i)} ${y}H${RULER}`;
        if (i % 10 === 0) {
            add(ruler, 'text', { transform: `translate(20 ${y + 2}) rotate(-90)`, 'text-anchor': 'end' }, i / 2);
        }
    }
    add(ruler, 'path', { d: d });
    add(ruler, 'path', { class: 'marker', d: 'M24 608V618L30 613Z' });
}

function drawRulers() {
    drawTopRuler();
    drawLeftRuler();
}

// Inkscape default palette
const colors = (
    '1a1a1a 333333 4d4d4d 666666 999999 b3b3b3 cccccc e6e6e6 ececec f2f2f2 f9f9f9 ' +
    '800000 ff0000 808000 ffff00 008000 00ff00 008080 00ffff 000080 0000ff 800080 ff00ff ' +
    '2b0000 550000 800000 aa0000 d40000 ff0000 ff2a2a ff5555 ff8080 ffaaaa ffd5d5 ' +
    '280b0b 501616 782121 a02c2c c83737 d35f5f de8787 e9afaf f4d7d7 ' +
    '241c1c 483737 6c5353 916f6f ac9393 c8b7b7 e3dbdb ' +
    '2b1100 552200 803300 aa4400 d45500 ff6600 ff7f2a ff9955 ffb380 ffccaa ffe6d5 ' +
    '28170b 502d16 784421 a05a2c c87137 d38d5f deaa87 e9c6af f4e3d7 ' +
    '241f1c 483e37 6c5d53 917c6f ac9d93 c8beb7 e3dedb ' +
    '2b2200 554400 806600 aa8800 d4aa00 ffcc00 ffd42a ffdd55 ffe680 ffeeaa fff6d5 ' +
    '28220b 504416 786721 a0892c c8ab37 d3bc5f decd87 e9ddaf f4eed7 ' +
    '24221c 484537 6c6753'
).split(' ');

const swatches = document.getElementById('swatches');
colors.forEach(function(color) {
    const button = document.createElement('button');
    button.title = '#' + color;
    button.style.backgroundColor = '#' + color;
    swatches.appendChild(button);
});

drawRulers();
window.addEventListener('resize', drawRulers);
```
